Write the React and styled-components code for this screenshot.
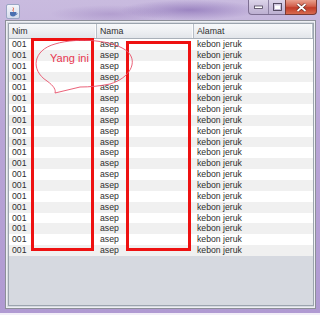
import React from "react";
import styled, { createGlobalStyle } from "styled-components";

const Global = createGlobalStyle`
  html, body { margin: 0; padding: 0; background: #ffffff; }
  body { width: 320px; height: 315px; overflow: hidden; font-family: "Liberation Sans", Arial, sans-serif; }
`;

const Frame = styled.div`
  position: relative;
  width: 320px;
  height: 315px;
  box-sizing: border-box;
  padding: 0 4px 4px 5px;
  display: flex;
  flex-direction: column;
  background:
    radial-gradient(ellipse 70px 10px at 190px 10px, rgba(120, 90, 170, 0.55), rgba(120, 90, 170, 0) 100%),
    radial-gradient(ellipse 60px 9px at 110px 14px, rgba(140, 110, 180, 0.35), rgba(140, 110, 180, 0) 100%),
    linear-gradient(180deg, #c9bbdf 0%, #b9a5d6 40%, #b09ad2 100%);
  border-bottom: 2px solid #f2eef8;
`;

const TitleBar = styled.div`
  height: 20px;
  flex: none;
  display: flex;
  align-items: flex-start;
  position: relative;
`;

const AppIcon = styled.div`
  width: 12px;
  height: 13px;
  margin: 4px 0 0 1px;
  border: 1px solid #9aa5c4;
  border-radius: 2px;
  background: linear-gradient(180deg, #f4f6fb, #d5dbec);
  display: flex;
  align-items: center;
  justify-content: center;
`;

const Buttons = styled.div`
  margin-left: auto;
  margin-right: -1px;
  display: flex;
  height: 15px;
`;

const Group = styled.div`
  display: flex;
  border: 1px solid #7d6f92;
  border-top: none;
  border-right: none;
  border-radius: 0 0 0 4px;
  background: linear-gradient(180deg, #ddd5ea 0%, #cbc0dc 50%, #bdb0d2 100%);
  overflow: hidden;
`;

const WinBtn = styled.div`
  width: ${(p) => p.$w}px;
  height: 14px;
  display: flex;
  align-items: center;
  justify-content: center;
  border-left: ${(p) => (p.$sep ? "1px solid #8e82a4" : "none")};
  box-sizing: border-box;
`;

const CloseBtn = styled.div`
  width: 32px;
  height: 15px;
  box-sizing: border-box;
  border: 1px solid #7a3a34;
  border-top: none;
  border-radius: 0 0 4px 0;
  background: linear-gradient(180deg, #e9a08e 0%, #d2604c 45%, #c23c28 55%, #d86a50 100%);
  display: flex;
  align-items: center;
  justify-content: center;
`;

const Client = styled.div`
  flex: 1;
  display: flex;
  flex-direction: column;
  box-sizing: border-box;
  border: 1px solid #8c8f98;
  box-shadow: inset 0 0 0 1px #eef0f4;
  padding: 2px 1px 2px 2px;
  background: #d6d9e0;
`;

const ScrollPane = styled.div`
  flex: 1;
  border: 1px solid #9ba4ae;
  background: #d6d9e0;
  display: flex;
  flex-direction: column;
`;

const cols = "88px 97px 1fr";

const HeaderRow = styled.div`
  display: grid;
  grid-template-columns: ${cols};
  height: 14px;
  background: linear-gradient(180deg, #f7f8fa 0%, #eef0f3 50%, #e2e5ea 100%);
  border-bottom: 1px solid #a9b0b9;
`;

const HeaderCell = styled.div`
  font-size: 8.8px;
  color: #303030;
  line-height: 14px;
  padding-left: 3px;
  border-right: 1px solid #b7bec7;
  box-shadow: inset -1px 0 0 #fbfbfc;
`;

const Rows = styled.div`
  display: flex;
  flex-direction: column;
`;

const Row = styled.div`
  display: grid;
  grid-template-columns: ${cols};
  height: 10.85px;
  background: ${(p) => (p.$alt ? "#f0f0f0" : "#ffffff")};
`;

const Cell = styled.div`
  font-size: 8.7px;
  color: #2e2e2e;
  line-height: 10.85px;
  padding-left: 3px;
  white-space: nowrap;
`;

const Overlay = styled.svg`
  position: absolute;
  left: 0;
  top: 0;
  pointer-events: none;
`;

const Callout = styled.div`
  position: absolute;
  left: 50px;
  top: 52px;
  font-size: 11px;
  color: #e8364f;
  font-family: "Liberation Sans", Arial, sans-serif;
`;

export default function App() {
  const rows = Array.from({ length: 20 }, (_, i) => i);
  return (
    <>
      <Global />
      <Frame>
        <TitleBar>
          <AppIcon>
            <svg width="9" height="10" viewBox="0 0 9 10">
              <path d="M4 0.5 C5.5 2 3 3 4.5 4.5" stroke="#e0502a" strokeWidth="1" fill="none" />
              <path d="M1 5 H7 V7 C7 8.5 6 9.5 4 9.5 C2 9.5 1 8.5 1 7 Z" fill="#4a6fb0" />
              <path d="M7 5.8 C8.6 5.8 8.6 7.6 7 7.6" stroke="#4a6fb0" strokeWidth="0.8" fill="none" />
            </svg>
          </AppIcon>
          <Buttons>
            <Group>
              <WinBtn $w={19}>
                <svg width="9" height="4" viewBox="0 0 9 4">
                  <rect x="0.5" y="1" width="8" height="2.5" fill="#fff" stroke="#4a4058" strokeWidth="0.8" />
                </svg>
              </WinBtn>
              <WinBtn $w={17} $sep>
                <svg width="9" height="8" viewBox="0 0 9 8">
                  <rect x="0.5" y="0.5" width="8" height="7" fill="none" stroke="#4a4058" strokeWidth="0.9" />
                  <rect x="2" y="2.5" width="5" height="3.5" fill="#fff" />
                </svg>
              </WinBtn>
            </Group>
            <CloseBtn>
              <svg width="11" height="9" viewBox="0 0 11 9">
                <path d="M1.5 1 L9.5 8 M9.5 1 L1.5 8" stroke="#5a2018" strokeWidth="3" />
                <path d="M1.5 1 L9.5 8 M9.5 1 L1.5 8" stroke="#ffffff" strokeWidth="1.8" />
              </svg>
            </CloseBtn>
          </Buttons>
        </TitleBar>
        <Client>
          <ScrollPane>
            <HeaderRow>
              <HeaderCell>Nim</HeaderCell>
              <HeaderCell>Nama</HeaderCell>
              <HeaderCell>Alamat</HeaderCell>
            </HeaderRow>
            <Rows>
              {rows.map((i) => (
                <Row key={i} $alt={i % 2 === 1}>
                  <Cell>001</Cell>
                  <Cell>asep</Cell>
                  <Cell>kebon jeruk</Cell>
                </Row>
              ))}
            </Rows>
          </ScrollPane>
        </Client>
        <Overlay width="320" height="315" viewBox="0 0 320 315">
          <rect x="32.5" y="39.5" width="60" height="210" fill="none" stroke="#ee1111" strokeWidth="3" />
          <rect x="127.5" y="42.5" width="62" height="207" fill="none" stroke="#ee1111" strokeWidth="3" />
          <path
            d="M47 81 C30 70 33 50 55 44 C78 37 115 40 128 52 C138 62 130 78 110 84 C100 86 90 87 80 87 L55 93 C56 90 54 86 47 81 Z"
            fill="none"
            stroke="#e8506a"
            strokeWidth="0.9"
          />
        </Overlay>
        <Callout>Yang ini</Callout>
      </Frame>
    </>
  );
}
